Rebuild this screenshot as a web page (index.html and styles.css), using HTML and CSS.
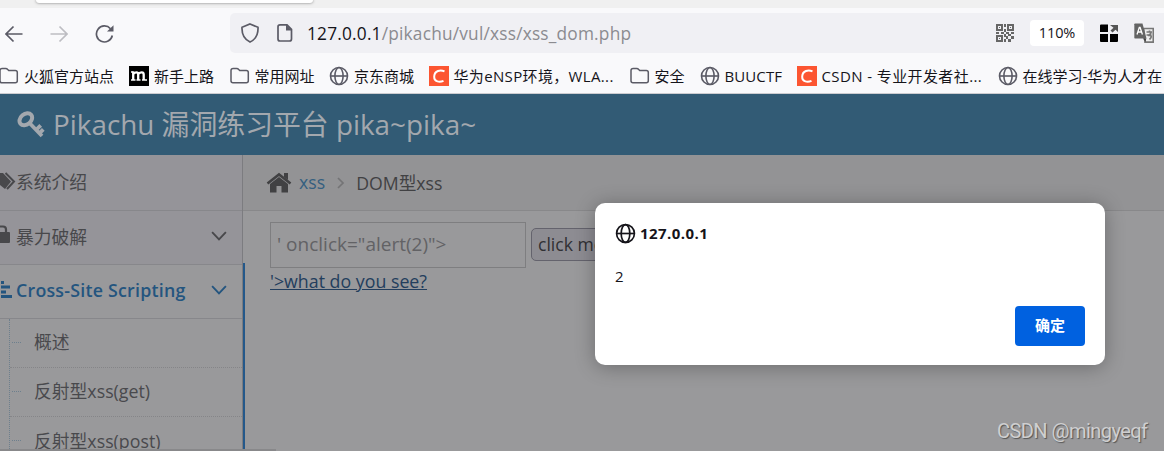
FILE: index.html
```html
<!DOCTYPE html>
<html lang="zh-CN">
<head>
<meta charset="utf-8">
<title>Pikachu 漏洞练习平台 pika~pika~</title>
<link rel="stylesheet" href="styles.css">
</head>
<body>
<svg class="defs" width="0" height="0">
  <defs>
    <symbol id="globe" viewBox="0 0 20 20"><g fill="none" stroke="currentColor" stroke-width="1.6"><circle cx="10" cy="10" r="8.5"/><ellipse cx="10" cy="10" rx="4.1" ry="8.5"/><path d="M1.5 10h17"/></g></symbol>
    <symbol id="folder" viewBox="0 0 20 20"><path d="M3.2 2.5h3.5c.8 0 1.3.2 1.8.8l1.2 1.2h6.6c1.2 0 2 .8 2 2v8.3c0 1.200-.8 2-2 2H3c-1.200 0-2-.8-2-2V4.500c0-1.200.9-2 2.200-2z" fill="none" stroke="currentColor" stroke-width="1.5"/></symbol>
    <symbol id="csdn" viewBox="0 0 20 20"><path fill="#fc5531" d="M0 0h20v20H0z"/><path d="M15.500 5.300C11.500 3.600 5.500 4.300 5.200 10.500c-.2 5.500 5.500 6 9.300 4.300" fill="none" stroke="#fff" stroke-width="2"/></symbol>
    <symbol id="chev" viewBox="0 0 14 9"><path d="M.8 1 7 7.500 13.200 1" fill="none" stroke="currentColor" stroke-width="1.700"/></symbol>
  </defs>
</svg>
<div class="tabstrip"><div class="tab"></div></div>
<div class="toolbar">
  <svg class="back" width="18" height="18" viewBox="0 0 18 18"><path d="M17.500 9H1M8.500 1.500 1 9l7.500 7.500"/></svg>
  <svg class="forward" width="18" height="18" viewBox="0 0 18 18"><path d="M.5 9H17M9.500 1.500 17 9l-7.500 7.500"/></svg>
  <svg class="reload" width="20" height="20" viewBox="0 0 20 20"><path d="M17.300 11.500A8 8 0 1 1 15.500 4.700"/><path class="solid" d="M18.500 1.200v6.300H12z"/></svg>
  <div class="urlbar">
    <svg class="shield" width="20" height="20" viewBox="0 0 20 20"><path d="M10 1 18 4.300C18.300 10.500 16.500 16 10 19 3.500 16 1.700 10.500 2 4.300z"/></svg>
    <svg class="page-icon" width="16" height="20" viewBox="0 0 16 20"><path d="M3 1.800h7l4.500 4.500v9.700c0 1.300-.7 2-2 2H3c-1.300 0-2-.7-2-2V3.800c0-1.300.7-2 2-2z"/><path class="solid" d="M9 1.500v6h6z"/></svg>
    <span class="url"><b>127.0.0.1</b>/pikachu/vul/xss/xss_dom.php</span>
    <svg class="qr" width="18" height="18" viewBox="0 0 18 18"><g fill="none" stroke="#666" stroke-width="2"><path d="M1 1h5v5H1zM12 1h5v5h-5zM1 12h5v5H1z"/></g><path fill="#666" d="M8 0h2v3H8zM8 5h2v3H8zM0 8h3v2H0zM5 8h3v2H5zM10 8h3v2h-3zM15 8h3v2h-3zM8 10h2v3H8zM8 15h2v3H8zM10 12h2v3h-2zM12 10h3v2h-3zM15 12h3v3h-3zM12 15h3v3h-3zM3 3h1v1H3zM14 3h1v1h-1zM3 14h1v1H3z"/></svg>
    <span class="zoom">110%</span>
    <svg class="apps" width="18" height="18" viewBox="0 0 18 18"><path fill="#000" d="M0 1.500Q0 .5 1 .5h7v7.500H0zM0 10h8v8H1q-1 0-1-1zM10 10h8v7q0 1-1 1h-7z"/><path fill="#555" d="M10 1h8v7l-2.500-2.300L12.500 8.500 10.500 6.500l3-2.800z"/></svg>
    <svg class="translate" width="20" height="20" viewBox="0 0 20 20"><path d="M9.500 5.500h9.800v13.700H11z" fill="#eee" stroke="#777"/><path d="M1 .5h7.500l4 15H1q-.7 0-.7-.7V1.200Q.3.500 1 .5z" fill="#646464"/><path d="m9 15.500 2.500 3.500.8-3.500z" fill="#444"/><path d="m3 11.500 2.300-7h.8l2.300 7M3.800 9h3.700" fill="none" stroke="#fff" stroke-width="1.300"/><path d="M12.500 9h5.500M15.500 7.500V9c2 0 2 2-1.500 3.500 4-1 4 2 1.500 4M12.500 12h5" fill="none" stroke="#777"/></svg>
  </div>
</div>
<div class="bookmarks">
  <div class="bm"><svg><use href="#folder"/></svg>火狐官方站点</div>
  <div class="bm"><svg viewBox="0 0 20 20"><path d="M0 0h20v20H0z"/><path d="M4.200 5.500v8.500M9.200 14V8.500q0-2.200-1.800-2.200-1.500 0-3.200 1.700M14.700 14V8.500q0-2.200-2-2.200-1.600 0-3.500 1.700" fill="none" stroke="#fff" stroke-width="2.300"/><path d="M2 6h2.500M2 14h4.500M7.500 14h4M13 14h5" fill="none" stroke="#fff" stroke-width="1.500"/></svg>新手上路</div>
  <div class="bm"><svg><use href="#folder"/></svg>常用网址</div>
  <div class="bm"><svg><use href="#globe"/></svg>京东商城</div>
  <div class="bm"><svg><use href="#csdn"/></svg><span class="ensp">华为eNSP环境，WLA...</span></div>
  <div class="bm"><svg><use href="#folder"/></svg>安全</div>
  <div class="bm"><svg><use href="#globe"/></svg><span class="buu">BUUCTF</span></div>
  <div class="bm"><svg><use href="#csdn"/></svg><span class="dev">CSDN - 专业开发者社...</span></div>
  <div class="bm"><svg><use href="#globe"/></svg>在线学习-华为人才在</div>
</div>
<header class="site-header">
  <svg width="28" height="27" viewBox="0 0 28 27"><g fill="none" stroke="currentColor"><ellipse cx="8.800" cy="8.300" rx="7" ry="5.200" transform="rotate(-40 8.800 8.300)" stroke-width="4"/><path d="m12 11.500 13 13.500M19 19l4.700-4.700M22.300 22.300l4-4" stroke-width="3.800"/></g></svg>
  <span>Pikachu 漏洞练习平台 pika~pika~</span>
</header>
<div class="main">
  <aside class="sidebar">
    <div class="nav intro"><svg class="tags" width="16" height="19" viewBox="0 0 16 19"><path fill="currentColor" d="M0 1h3l8 8.500L5 17l-5-4z"/><path d="M5.500 1 14 9.500 7 17" fill="none" stroke="currentColor" stroke-width="2"/></svg><span>系统介绍</span></div>
    <div class="nav brute"><svg class="lock" width="16" height="20" viewBox="0 0 16 20"><path fill="currentColor" d="M0 8h9q1 0 1 1v9q0 1-1 1H0z"/><path d="M0 2.500h3q3 0 3 3V8" fill="none" stroke="currentColor" stroke-width="2.200"/></svg><span>暴力破解</span><svg class="chev"><use href="#chev"/></svg></div>
    <div class="nav active"><svg width="16" height="20" viewBox="0 0 16 20"><path fill="currentColor" d="M1 1h3v3H1zM1 5.500h9v3H1zM1 10.500h5v3H1zM1 15h11v3H1z"/></svg><span>Cross-Site Scripting</span><svg class="chev"><use href="#chev"/></svg></div>
    <div class="submenu">
      <div class="sub">概述</div>
      <div class="sub">反射型xss(get)</div>
      <div class="sub">反射型xss(post)</div>
    </div>
  </aside>
  <section class="content">
    <div class="crumbs">
      <svg class="home" width="26" height="21" viewBox="0 0 26 21"><path d="m1.500 11.500 11.500-9 11.500 9" fill="none" stroke="currentColor" stroke-width="2.600"/><path fill="currentColor" d="M18 1h4v7l-4-3zM4 12l9-7 9 7v8.500h-6.500V14h-5v6.500H4z"/></svg>
      <a>xss</a>
      <svg class="sep" width="8" height="12" viewBox="0 0 8 12"><path d="m1 1 5 5-5 5"/></svg>
      <span>DOM型xss</span>
    </div>
    <div class="body">
      <div class="form"><div class="field">' onclick="alert(2)"&gt;</div><div class="button">click me!</div></div>
      <a class="result">'&gt;what do you see?</a>
    </div>
  </section>
</div>
<div class="statusbar"></div>
<div class="dialog">
  <div class="origin"><svg><use href="#globe"/></svg><span>127.0.0.1</span></div>
  <div class="message">2</div>
  <div class="ok">确定</div>
</div>
<div class="watermark">CSDN @mingyeqf</div>
</body>
</html>
```
FILE: styles.css
```css
* { box-sizing: border-box; }
body { margin: 0; width: 1164px; height: 451px; overflow: hidden; position: relative; background: #99999b; font-family: "Open Sans", "Noto Sans CJK SC", sans-serif; white-space: nowrap; }
svg { flex: none; }
.defs { position: absolute; }
.tabstrip { height: 8px; background: #f0f0f0; overflow: hidden; }
.tab { width: 277px; height: 3px; margin-left: 36px; background: #fff; border-radius: 0 0 4px 4px; box-shadow: 0 0 3px #777; }
.toolbar { height: 50px; background: #f9f9fb; display: flex; align-items: flex-start; padding: 5px 0 0 5px; }
.toolbar svg { fill: none; stroke: #5b5b66; stroke-width: 1.7; }
.toolbar .solid { fill: #5b5b66; stroke: none; }
.back, .forward { margin-top: 12px; }
.toolbar .forward { margin-left: 27px; stroke: #bdbdc2; }
.reload { margin: 11px 0 0 27px; }
.urlbar { margin-left: 115px; flex: 1; height: 40px; border-radius: 5px 0 0 5px; background: #f0f0f4; display: flex; align-items: center; padding-left: 10px; }
.page-icon { margin-left: 17px; }
.url { margin-left: 14px; width: 689px; font-size: 17.300px; color: #8b8b90; letter-spacing: .2px; }
.url b { font-weight: 400; color: #15141a; }
.urlbar .qr, .urlbar .apps, .urlbar .translate { stroke: none; }
.zoom { margin-left: 16px; width: 54px; height: 26px; border-radius: 4px; background: #fff; font-size: 14.500px; line-height: 26px; text-align: center; color: #15141a; letter-spacing: -.1px; }
.apps { margin-left: 16px; }
.translate { margin-left: 16px; }
.bookmarks { height: 36px; background: #f9f9fb; border-bottom: 1px solid #ccccd0; display: grid; grid-template-columns: 129px 100.500px 99.500px 99.500px 201px 70px 97px 201px 166px; color: #15141a; font-size: 15px; line-height: 20px; padding-top: 8px; }
.bm { display: flex; align-items: center; gap: 5px; height: 20px; }
.bm svg { width: 20px; height: 20px; color: #5b5b66; }
.bm:first-child { margin-left: -1px; }
.ensp { letter-spacing: .35px; }
.buu { letter-spacing: .1px; }
.dev { letter-spacing: .4px; }
.site-header { height: 61px; background: #325b75; color: #a3a8ae; display: flex; align-items: center; gap: 8px; padding: 0 0 3px 17px; font-size: 27.850px; }
.site-header svg { margin-top: 2px; }
.site-header span { margin-top: -1px; }
.main { display: flex; height: 296px; }
.sidebar { position: relative; width: 243px; border-right: 1px solid #7c7c80; color: #49494d; }
.nav { height: 54px; border-bottom: 1px solid #87878b; background: #959499; display: flex; align-items: center; padding-bottom: 3px; font-size: 17.800px; color: #48484b; }
.nav.intro { height: 56px; padding-bottom: 3px; }
.lock { margin-top: -4px; }
.nav.active { color: #24557f; background: #99999b; font-weight: 600; letter-spacing: .23px; }
.nav .chev { width: 16px; height: 10px; margin-left: auto; margin-right: 15px; }
.submenu { position: relative; border-left: 1px dotted #6d7f8d; margin-left: 9px; height: 132px; }
.sub { height: 49px; line-height: 47px; padding-left: 24px; font-size: 17.800px; border-bottom: 1px dotted #858588; }
.sub:last-child { height: 34px; border-bottom: 0; line-height: 48px; }
.sub::before { content: ""; position: absolute; left: 2px; width: 9px; margin-top: 23px; border-top: 1px dotted #6d7f8d; }
.content { flex: 1; }
.crumbs { height: 56px; background: #939395; border-bottom: 1px solid #88888a; display: flex; align-items: center; padding: 0 0 1px 23px; font-size: 17.700px; color: #414143; }
.crumbs a { margin-left: 7px; color: #355f80; }
.sep { margin: 2px 11px 0 12px; fill: none; stroke: #747476; stroke-width: 1.700; }
.body { padding: 11px 0 0 27px; }
.form { display: flex; align-items: center; gap: 5px; }
.field { width: 256px; height: 46px; border: 1px solid #7e7e80; font-size: 19px; line-height: 43px; padding-left: 6px; color: #626265; }
.button { width: 100px; height: 33px; margin-top: -2px; border: 1px solid #64636d; border-radius: 5px; background: #8d8c92; padding-left: 6px; font-size: 17.600px; line-height: 30px; color: #303034; }
.result { display: inline-block; color: #233e5d; font-size: 17.800px; line-height: 26px; text-decoration: underline; }
.sidebar::after { content: ""; position: absolute; right: -3px; top: 108px; width: 2px; bottom: 0; background: #24588a; }
.statusbar { position: absolute; left: 0; bottom: 0; width: 276px; height: 2px; background: #88888a; }
.dialog { position: absolute; left: 595px; top: 203px; width: 510px; height: 162px; border-radius: 10px; background: #fff; box-shadow: 0 2px 20px rgba(0,0,0,.3); padding: 20px; color: #15141a; display: flex; flex-direction: column; font-size: 15px; }
.origin { display: flex; align-items: center; gap: 4px; height: 21px; font-weight: 700; letter-spacing: .45px; }
.origin span { margin-top: -1px; }
.origin svg { width: 21px; height: 21px; }
.message { margin-top: 21px; line-height: 22px; }
.ok { margin: auto 0 -1px auto; width: 70px; height: 40px; border-radius: 4px; background: #0061e0; color: #fff; font-weight: 700; line-height: 39px; text-align: center; }
.watermark { position: absolute; left: 997px; top: 419px; font: 20px/25px Roboto, sans-serif; letter-spacing: -.55px; color: #cfcfd0; text-shadow: 1px 1px 1px #555; }
```
